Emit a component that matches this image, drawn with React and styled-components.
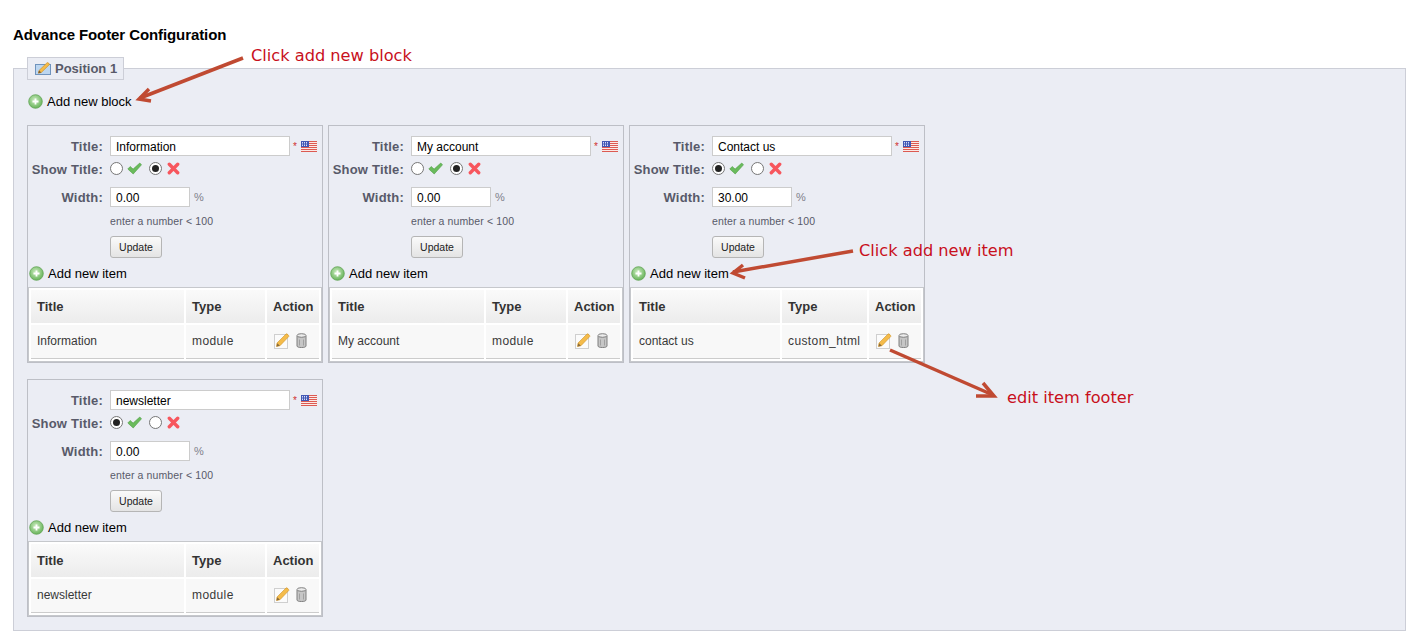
import React from "react";
import styled, { createGlobalStyle } from "styled-components";

const Global = createGlobalStyle`
  html, body { margin: 0; padding: 0; background: #fff; }
  body { font-family: "Liberation Sans", Arial, sans-serif; overflow: hidden; }
`;

const Page = styled.div`
  position: relative;
  width: 1413px;
  height: 638px;
  overflow: hidden;
  padding-left: 13px;
  box-sizing: border-box;
`;
const Heading = styled.h1`
  margin: 0 0 14px;
  padding-top: 26px;
  font-size: 15px;
  line-height: 17px;
  letter-spacing: -0.09px;
  font-weight: bold;
  color: #000;
`;
const Fieldset = styled.fieldset`
  margin: 0;
  padding: 13px 13px 13px;
  width: 1393px;
  box-sizing: border-box;
  background: #ebedf4;
  border: 1px solid #ccced7;
  min-width: 0;
`;
const Legend = styled.legend`
  display: flex;
  align-items: center;
  gap: 4px;
  box-sizing: border-box;
  width: 97px;
  height: 23px;
  padding: 0 0 0 7px;
  background: #ebedf4;
  border: 1px solid #ccced7;
  font-size: 13px;
  font-weight: bold;
  color: #585a69;
`;
const AddRow = styled.div`
  display: flex;
  align-items: center;
  height: 16px;
  gap: ${(p) => p.$gap}px;
  padding-left: ${(p) => p.$indent}px;
  font-size: 13px;
  color: #000;
`;
const Blocks = styled.div`
  display: grid;
  grid-template-columns: repeat(3, 296px);
  gap: 16px 5px;
  margin-top: 16px;
`;
const Block = styled.div`
  box-sizing: border-box;
  width: 296px;
  height: 238px;
  padding-top: 10px;
  border: 1px solid #bdbfc6;
`;
const FormRow = styled.div`
  display: flex;
  align-items: center;
  height: 20px;
  margin-top: ${(p) => p.$top || 0}px;
`;
const Label = styled.label`
  width: 75px;
  margin-right: 7px;
  flex: none;
  text-align: right;
  white-space: nowrap;
  font-size: 13px;
  letter-spacing: 0.2px;
  font-weight: bold;
  color: #585a69;
`;
const TextInput = styled.div`
  box-sizing: border-box;
  width: ${(p) => p.$w}px;
  height: 20px;
  line-height: 20px;
  padding-left: 5px;
  background: #fff;
  border: 1px solid #ccc;
  font-size: 12px;
  color: #000;
`;
const Star = styled.span`
  margin: 0 3px 0 3px;
  width: 5px;
  font-size: 10px;
  color: #d03030;
`;
const Radio = styled.span`
  box-sizing: border-box;
  flex: none;
  width: 13px;
  height: 13px;
  border-radius: 50%;
  border: 1px solid #767676;
  background: #fff;
  display: flex;
  align-items: center;
  justify-content: center;
  margin-right: ${(p) => p.$space}px;
  &::after {
    content: "";
    display: ${(p) => (p.$on ? "block" : "none")};
    width: 7px;
    height: 7px;
    border-radius: 50%;
    background: #222;
  }
`;
const Choice = styled.span`
  display: flex;
  align-items: center;
  width: 39px;
  margin-top: -1px;
`;
const Percent = styled.span`
  margin-left: 4px;
  font-size: 11px;
  color: #7f7f8a;
  margin-top: -1px;
`;
const Hint = styled.div`
  margin: 7px 0 0 82px;
  height: 14px;
  line-height: 14px;
  font-size: 10.5px;
  letter-spacing: 0.12px;
  color: #585a69;
`;
const Button = styled.button`
  display: block;
  box-sizing: border-box;
  width: 52px;
  height: 22px;
  margin: 8px 0 7px 82px;
  padding: 0;
  border: 1px solid #b5b5b5;
  border-radius: 3px;
  background: linear-gradient(#fafafa, #e4e4e4);
  font-family: inherit;
  font-size: 10.5px;
  color: #222;
`;
const TableWrap = styled.div`
  margin-top: 6px;
  border: 1px solid #c6c8cc;
  background: #fff;
`;
const Table = styled.table`
  table-layout: fixed;
  width: 292px;
  border-collapse: separate;
  border-spacing: 2px;
  color: #383838;
`;
const Th = styled.th`
  height: 33px;
  padding: 0 0 0 ${(p) => p.$pad}px;
  box-sizing: border-box;
  background: linear-gradient(#fafafa, #ececec);
  font-size: 13px;
  font-weight: bold;
  text-align: left;
  color: #333;
`;
const Td = styled.td`
  height: 34px;
  padding: 0 0 2px ${(p) => p.$pad}px;
  box-sizing: border-box;
  background: #f8f8f8;
  border-bottom: 1px solid #ccc;
  font-size: 12px;
  letter-spacing: ${(p) => p.$track || 0}px;
  color: #383838;
`;
const Actions = styled.div`
  display: flex;
  align-items: center;
  gap: 6px;
`;
const Overlay = styled.svg`
  position: absolute;
  left: 0;
  top: 0;
  pointer-events: none;
`;
const Note = styled.span`
  position: absolute;
  left: ${(p) => p.$x}px;
  top: ${(p) => p.$y}px;
  font-family: "DejaVu Sans", Verdana, sans-serif;
  font-size: 16.2px;
  line-height: 18px;
  white-space: nowrap;
  color: #c8101c;
`;

const AddIcon = () => (
  <svg width="15" height="15" viewBox="0 0 15 15">
    <defs>
      <radialGradient id="gr" cx="45%" cy="40%" r="65%">
        <stop offset="0" stopColor="#cfeec4" />
        <stop offset="1" stopColor="#5eae50" />
      </radialGradient>
    </defs>
    <circle cx="7.5" cy="7.5" r="6.8" fill="url(#gr)" stroke="#62a556" strokeWidth="0.8" />
    <path d="M7.5 4.500v6M4.500 7.500h6" stroke="#fff" strokeWidth="1.800" />
  </svg>
);
const DocEditIcon = () => (
  <svg width="16" height="16" viewBox="0 0 16 16">
    <rect x="0.5" y="1.500" width="13" height="14" fill="#fbfbfb" stroke="#cfcfcf" />
    <path d="M3 10L12 1c.8-.8 3.500 1.800 2.700 2.600L6 12.700 2.500 13.500z" fill="#f4bb4a" stroke="#cf9227" strokeWidth="0.6" />
    <path d="M2.500 13.600l.8-3.300 2.500 2.500z" fill="#8a6a3a" />
  </svg>
);
const PanelEditIcon = () => (
  <svg width="16" height="13" viewBox="0 0 16 13">
    <rect x="0.5" y="2.500" width="15" height="10" fill="#bcd6f0" stroke="#6f93bd" />
    <path d="M4 8.500L12 .8c.8-.8 3 1.200 2.200 2L6.300 10.500 3.400 11.200z" fill="#f4bb4a" stroke="#c98a20" strokeWidth="0.6" />
    <path d="M3.300 11.300l.7-2.800 2.300 2.100z" fill="#7a5b30" />
  </svg>
);
const TrashIcon = () => (
  <svg width="11" height="15" viewBox="0 0 11 15">
    <path d="M1 3h9v10c0 1-2 1.500-4.500 1.500S1 14 1 13z" fill="#c6c6c6" stroke="#7f7f7f" />
    <ellipse cx="5.500" cy="2.500" rx="4.500" ry="1.800" fill="#ececec" stroke="#7f7f7f" />
    <path d="M3.500 6.500v6M7.500 6.500v6" stroke="#a0a0a0" />
  </svg>
);
const CheckIcon = () => (
  <svg width="15" height="13" viewBox="0 0 15 13">
    <path d="M.8 7l2.400-2.500 2.900 2.600L12.800 1l1.700 1.800L6.200 12z" fill="#6abb5c" stroke="#4f9e45" strokeWidth="0.6" />
  </svg>
);
const CrossIcon = () => (
  <svg width="13" height="13" viewBox="0 0 13 13">
    <path d="M2.300 2.300l8.400 8.400M10.700 2.300l-8.400 8.400" stroke="#f7565d" strokeWidth="3.400" strokeLinecap="round" />
  </svg>
);
const FlagIcon = () => (
  <svg width="16" height="11" viewBox="0 0 16 11">
    <rect width="16" height="11" fill="#fbe9e6" />
    <path d="M0 .5h16M0 2.500h16M0 4.500h16M0 6.500h16M0 8.500h16M0 10.500h16" stroke="#dc5a52" />
    <rect width="8" height="6" fill="#4258b4" />
    <path d="M1 1.500h6M1 3h6M1 4.500h6" stroke="#d6dcf8" strokeDasharray="1 1" />
  </svg>
);

const blocks = [
  { title: "Information", show: false, width: "0.00", item: "Information", type: "module", cols: [153, 79] },
  { title: "My account", show: false, width: "0.00", item: "My account", type: "module", cols: [152, 80] },
  { title: "Contact us", show: true, width: "30.00", item: "contact us", type: "custom_html", cols: [147, 85] },
  { title: "newsletter", show: true, width: "0.00", item: "newsletter", type: "module", cols: [153, 79] },
];

const FooterBlock = ({ data }) => (
  <Block>
    <FormRow>
      <Label>Title:</Label>
      <TextInput $w={180}>{data.title}</TextInput>
      <Star>*</Star>
      <FlagIcon />
    </FormRow>
    <FormRow $top={3}>
      <Label>Show Title:</Label>
      <Choice>
        <Radio $on={data.show} $space={4} />
        <CheckIcon />
      </Choice>
      <Choice>
        <Radio $on={!data.show} $space={5} />
        <CrossIcon />
      </Choice>
    </FormRow>
    <FormRow $top={8}>
      <Label>Width:</Label>
      <TextInput $w={80}>{data.width}</TextInput>
      <Percent>%</Percent>
    </FormRow>
    <Hint>enter a number &lt; 100</Hint>
    <Button>Update</Button>
    <AddRow $gap={4} $indent={1}>
      <AddIcon />
      Add new item
    </AddRow>
    <TableWrap>
      <Table>
        <colgroup>
          <col width={data.cols[0]} />
          <col width={data.cols[1]} />
          <col width="52" />
        </colgroup>
        <thead>
          <tr>
            <Th $pad={6}>Title</Th>
            <Th $pad={6}>Type</Th>
            <Th $pad={6}>Action</Th>
          </tr>
        </thead>
        <tbody>
          <tr>
            <Td $pad={6}>{data.item}</Td>
            <Td $pad={6} $track={0.4}>{data.type}</Td>
            <Td $pad={7}>
              <Actions>
                <DocEditIcon />
                <TrashIcon />
              </Actions>
            </Td>
          </tr>
        </tbody>
      </Table>
    </TableWrap>
  </Block>
);

export default function App() {
  return (
    <Page>
      <Global />
      <Heading>Advance Footer Configuration</Heading>
      <Fieldset>
        <Legend>
          <PanelEditIcon />
          Position 1
        </Legend>
        <AddRow $gap={4} $indent={1}>
          <AddIcon />
          Add new block
        </AddRow>
        <Blocks>
          {blocks.map((b) => (
            <FooterBlock key={b.title} data={b} />
          ))}
        </Blocks>
      </Fieldset>
      <Overlay width="1413" height="638" viewBox="0 0 1413 638">
        <g stroke="#c04a32" strokeWidth="3.500" fill="none">
          <path d="M243 58L140 98" />
          <path d="M149 89L139 99L151 101" />
          <path d="M853 251L733 272" />
          <path d="M743 265L733 273L745 278" />
          <path d="M890 350L993 395" />
          <path d="M983 383L994 396L976 396" />
        </g>
      </Overlay>
      <Note $x={251} $y={47}>Click add new block</Note>
      <Note $x={859} $y={242}>Click add new item</Note>
      <Note $x={1007} $y={389}>edit item footer</Note>
    </Page>
  );
}
